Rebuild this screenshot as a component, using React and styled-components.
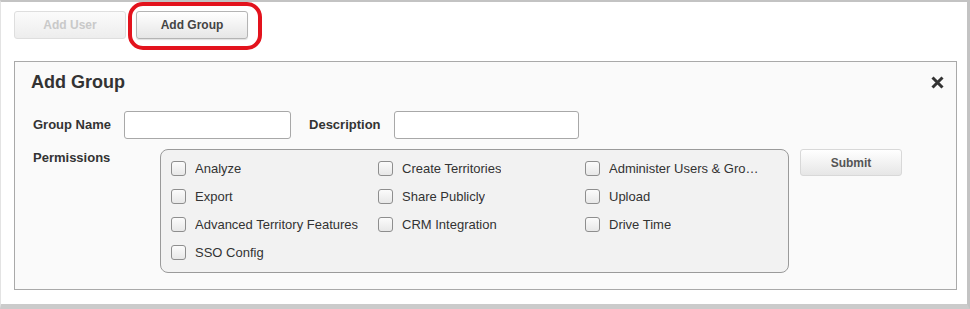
import React from 'react';
import styled, { createGlobalStyle } from 'styled-components';

const GlobalStyle = createGlobalStyle`
  body {
    margin: 0;
    background: #fff;
    font-family: "Liberation Sans", Arial, sans-serif;
  }
`;

// styled components
const Frame = styled.div`
  width: 970px;
  height: 309px;
  box-sizing: border-box;
  border-top: 2px solid #c3c3c3;
  border-left: 1px solid #e3e3e3;
  border-right: 3px solid #c3c3c3;
  border-bottom: 5px solid #cbcbcb;
  padding: 9px 10px 0 13px;
  background: #fff;
`;

const Toolbar = styled.div`
  display: flex;
  gap: 10px;
`;

const Highlight = styled.span`
  position: relative;
  display: inline-flex;
`;

const Ring = styled.span`
  position: absolute;
  top: -9px;
  bottom: -11px;
  left: -8px;
  right: -14px;
  border: 4px solid #e3131d;
  border-radius: 15px;
  pointer-events: none;
`;

const Button = styled.button`
  box-sizing: border-box;
  width: ${(p) => p.$width || 112}px;
  height: ${(p) => p.$height || 28}px;
  padding: 0;
  font-family: "Liberation Sans", Arial, sans-serif;
  font-size: 12px;
  font-weight: bold;
  color: ${(p) => (p.disabled ? '#c9c9c9' : p.$soft ? '#555' : '#444')};
  background: ${(p) =>
    p.disabled
      ? 'linear-gradient(#fbfbfb, #ededed)'
      : 'linear-gradient(#ffffff, #e6e6e6)'};
  border: 1px solid ${(p) => (p.disabled ? '#dedede' : p.$soft ? '#d8d8d8' : '#b4b4b4')};
  border-radius: 3px;
  box-shadow: ${(p) => (p.disabled || p.$soft ? 'none' : '0 1px 1px rgba(0,0,0,0.12)')};
  cursor: pointer;
`;

const Panel = styled.section`
  margin-top: 22px;
  width: 943px;
  height: 229px;
  box-sizing: border-box;
  border: 1px solid #a9a9a9;
  background: #fafafa;
  padding: 9px 12px 16px 16px;
`;

const TitleRow = styled.div`
  display: flex;
  justify-content: space-between;
  align-items: center;
  height: 22px;
`;

const Title = styled.h2`
  margin: 0;
  font-size: 18px;
  line-height: 22px;
  font-weight: bold;
  color: #333;
`;

const Close = styled.button`
  display: flex;
  padding: 0;
  border: 0;
  background: none;
  cursor: pointer;
`;

const FormRow = styled.div`
  display: flex;
  align-items: center;
  margin-top: 18px;
  padding-left: 2px;
`;

const FieldLabel = styled.label`
  font-size: 13px;
  font-weight: bold;
  color: #333;
  margin: ${(p) => p.$margin || '0 13px 0 0'};
  width: ${(p) => (p.$width ? `${p.$width}px` : 'auto')};
  line-height: 16px;
`;

const TextInput = styled.input`
  box-sizing: border-box;
  width: ${(p) => p.$width}px;
  height: 28px;
  border: 1px solid #a8a8a8;
  border-radius: 3px;
  background: #fff;
  font-family: inherit;
  font-size: 13px;
  padding: 0 6px;
`;

const PermRow = styled.div`
  display: flex;
  align-items: flex-start;
  margin-top: 10px;
  padding-left: 2px;
`;

const PermBox = styled.div`
  box-sizing: border-box;
  width: 629px;
  height: 124px;
  border: 1px solid #9a9a9a;
  border-radius: 8px;
  background: #f2f2f2;
  padding: 4px 0 0 10px;
  display: grid;
  grid-template-columns: 207px 207px 174px;
  grid-auto-rows: 28px;
  margin-right: 11px;
`;

const Option = styled.label`
  display: flex;
  align-items: center;
  gap: 9px;
  min-width: 0;
  cursor: pointer;
`;

const Check = styled.span`
  flex: none;
  width: 15px;
  height: 15px;
  box-sizing: border-box;
  border: 1px solid #8e8e8e;
  border-radius: 3px;
  background: linear-gradient(#fbfbfb, #e8e8e8);
`;

const OptionText = styled.span`
  font-size: 13px;
  color: #333;
  white-space: nowrap;
  overflow: hidden;
  text-overflow: ellipsis;
  min-width: 0;
`;

const permissions = [
  'Analyze',
  'Create Territories',
  'Administer Users & Groups',
  'Export',
  'Share Publicly',
  'Upload',
  'Advanced Territory Features',
  'CRM Integration',
  'Drive Time',
  'SSO Config',
];

function App() {
  return (
    <>
      <GlobalStyle />
      <Frame>
        <Toolbar>
          <Button disabled>Add User</Button>
          <Highlight>
            <Button>Add Group</Button>
            <Ring />
          </Highlight>
        </Toolbar>

        <Panel>
          <TitleRow>
            <Title>Add Group</Title>
            <Close aria-label='Close'>
              <svg width='13' height='13' viewBox='0 0 13 13'>
                <path d='M1.5 1.5 L11.5 11.5 M11.5 1.5 L1.5 11.5' stroke='#333' strokeWidth='3' />
              </svg>
            </Close>
          </TitleRow>

          <FormRow>
            <FieldLabel>Group Name</FieldLabel>
            <TextInput $width={167} />
            <FieldLabel $margin='0 13px 0 18px'>Description</FieldLabel>
            <TextInput $width={185} />
          </FormRow>

          <PermRow>
            <FieldLabel $width={127} $margin='1px 0 0 0'>Permissions</FieldLabel>
            <PermBox>
              {permissions.map((name) => (
                <Option key={name}>
                  <Check />
                  <OptionText>{name}</OptionText>
                </Option>
              ))}
            </PermBox>
            <Button $soft $width={102} $height={27}>Submit</Button>
          </PermRow>
        </Panel>
      </Frame>
    </>
  );
}

export default App;
